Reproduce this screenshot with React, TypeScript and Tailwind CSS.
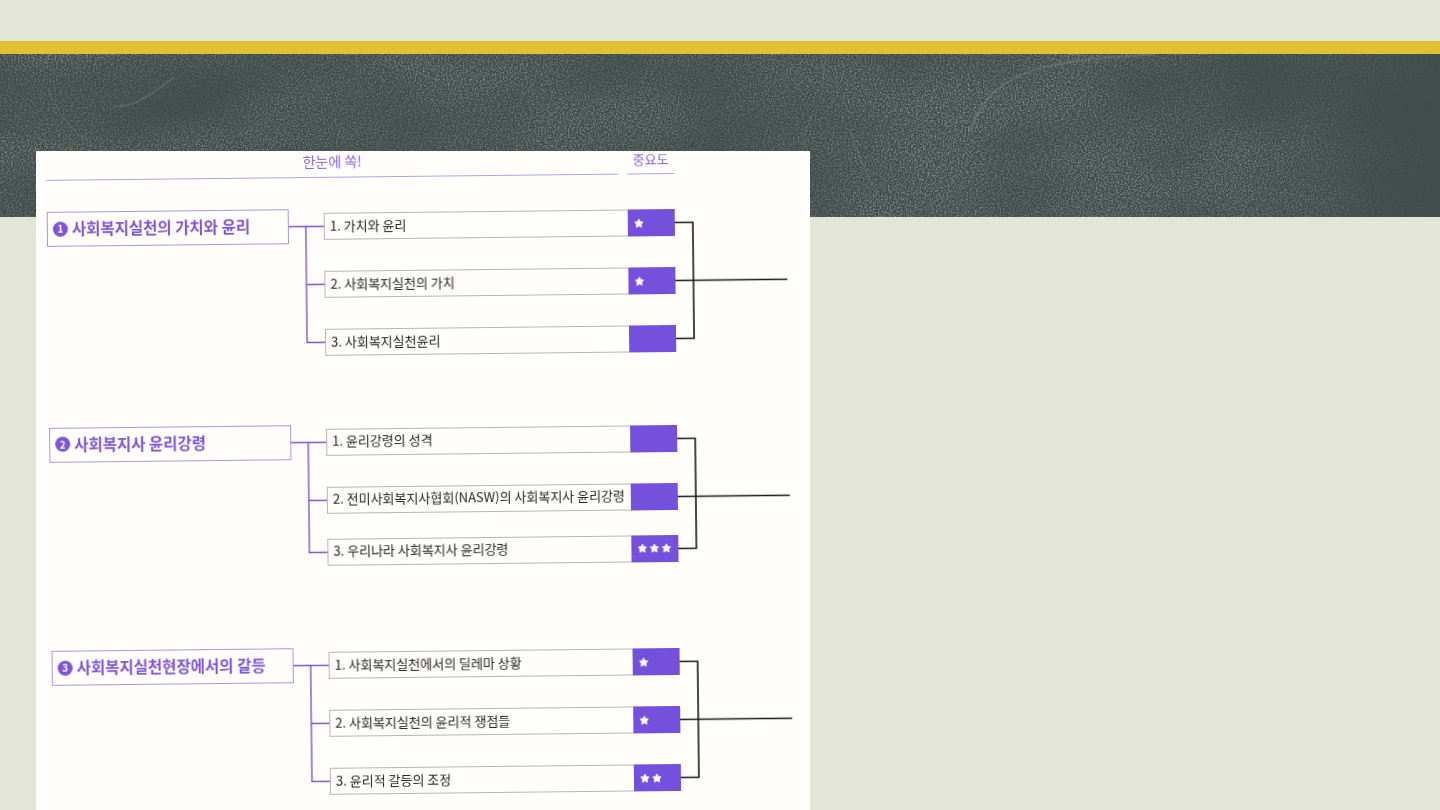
import { Star } from "lucide-react"

const font = { fontFamily: '"Noto Sans CJK KR", "Noto Sans", sans-serif' }

interface Item {
  label: string
  stars: number
}

interface Group {
  num: string
  title: string
  marginTop: string
  rowGaps: string[]
  centers: number[]
  items: Item[]
}

const groups: Group[] = [
  {
    num: "1",
    title: "사회복지실천의 가치와 윤리",
    marginTop: "mt-[31px]",
    rowGaps: ["mt-1", "mt-[31px]", "mt-[31px]"],
    centers: [17.5, 75.5, 133.5],
    items: [
      { label: "1. 가치와 윤리", stars: 1 },
      { label: "2. 사회복지실천의 가치", stars: 1 },
      { label: "3. 사회복지실천윤리", stars: 0 },
    ],
  },
  {
    num: "2",
    title: "사회복지사 윤리강령",
    marginTop: "mt-[68px]",
    rowGaps: ["mt-1", "mt-[31px]", "mt-[25px]"],
    centers: [17.5, 75.5, 127.5],
    items: [
      { label: "1. 윤리강령의 성격", stars: 0 },
      { label: "2. 전미사회복지사협회(NASW)의 사회복지사 윤리강령", stars: 0 },
      { label: "3. 우리나라 사회복지사 윤리강령", stars: 3 },
    ],
  },
  {
    num: "3",
    title: "사회복지실천현장에서의 갈등",
    marginTop: "mt-[82px]",
    rowGaps: ["mt-1", "mt-[31px]", "mt-[31px]"],
    centers: [17.5, 75.5, 133.5],
    items: [
      { label: "1. 사회복지실천에서의 딜레마 상황", stars: 1 },
      { label: "2. 사회복지실천의 윤리적 쟁점들", stars: 1 },
      { label: "3. 윤리적 갈등의 조정", stars: 2 },
    ],
  },
]

function Chalkboard() {
  return (
    <svg className="absolute inset-0 h-full w-full" viewBox="0 0 1440 163" preserveAspectRatio="none">
      <defs>
        <filter id="chalk" x="0" y="0" width="100%" height="100%">
          <feTurbulence type="fractalNoise" baseFrequency="0.6" numOctaves="2" seed="4" result="fine" />
          <feColorMatrix
            in="fine"
            type="matrix"
            values="0 0 0 0 0.42  0 0 0 0 0.46  0 0 0 0 0.44  0 0 0 1.5 -0.58"
            result="grain"
          />
          <feGaussianBlur in="grain" stdDeviation="0.5" result="soft" />
          <feTurbulence type="fractalNoise" baseFrequency="0.006 0.012" numOctaves="2" seed="23" result="cloud" />
          <feColorMatrix
            in="cloud"
            type="matrix"
            values="0 0 0 0 1  0 0 0 0 1  0 0 0 0 1  0 0 0 1.6 -0.1"
            result="patch"
          />
          <feComposite in="soft" in2="patch" operator="in" />
        </filter>
        <linearGradient id="fade" x1="0" x2="1" y1="0" y2="0">
          <stop offset="0" stopColor="#404c4a" stopOpacity="0" />
          <stop offset="1" stopColor="#404c4a" stopOpacity="0.85" />
        </linearGradient>
      </defs>
      <rect width="1440" height="163" filter="url(#chalk)" />
      <g fill="none" stroke="#7d8785" strokeOpacity="0.35" strokeLinecap="round">
        <path d="M48 35c8 22 20 38 42 54" strokeWidth="1" />
        <path d="M115 52c14 2 30-6 58-28" strokeWidth="2" />
        <path d="M355 0c2 8 3 12 2 18M380 2l60 26" strokeWidth="1" />
        <path d="M970 76c12-34 34-50 64-60 50-14 90-12 120-16" strokeWidth="2.5" />
        <path d="M850 76c6 22 14 40 30 68" strokeWidth="1.2" />
        <path d="M826 0c-2 14-4 26-4 40M812 60l-10 30" strokeWidth="1" />
        <path d="M1210 95l12-22M1300 100l6-30" strokeWidth="1" />
      </g>
      <rect x="1240" width="200" height="163" fill="url(#fade)" />
    </svg>
  )
}

function Row({ item, gap }: { item: Item; gap: string }) {
  return (
    <div className={`flex h-[27px] w-[351px] ${gap}`}>
      <div className="flex min-w-0 flex-1 items-center border border-r-0 border-[#b8b4b4] pb-[2px] pl-[5px] text-[13px] whitespace-nowrap text-[#242325]">
        {item.label}
      </div>
      <div className="flex w-[47px] shrink-0 items-center gap-[2px] bg-[#7550dd] pl-[6px]">
        {Array.from({ length: item.stars }).map((_, i) => (
          <Star key={i} size={10} fill="#ffffff" stroke="#ffffff" strokeWidth={2} />
        ))}
      </div>
    </div>
  )
}

function GroupBlock({ group }: { group: Group }) {
  const [a, b, c] = group.centers
  const height = c + 14

  return (
    <div className={`flex items-start ${group.marginTop}`}>
      <div className="flex h-[35px] w-[242px] shrink-0 items-center gap-[4px] border border-[#a996e6] pb-[1px] pl-[5px] text-[15.5px] font-bold whitespace-nowrap text-[#7f52da]">
        <span className="flex h-[15px] w-[15px] shrink-0 items-center justify-center rounded-full bg-[#7f52da] text-[10px] leading-none text-white">
          {group.num}
        </span>
        {group.title}
      </div>
      <svg className="shrink-0" width="35" height={height} fill="none" stroke="#7b55dc" strokeWidth="1.4">
        <path d={`M0 ${a}H35M17 ${a}V${c}H35M17 ${b}H35`} />
      </svg>
      <div className="flex shrink-0 flex-col">
        {group.items.map((item, i) => (
          <Row key={item.label} item={item} gap={group.rowGaps[i]} />
        ))}
      </div>
      <svg className="shrink-0" width="112" height={height} fill="none" stroke="#1c1a1b" strokeWidth="1.6">
        <path d={`M0 ${a}H18V${c}H0M0 ${b}H112`} />
      </svg>
    </div>
  )
}

export default function App() {
  return (
    <div className="relative h-[810px] w-[1440px] overflow-hidden bg-[#e3e5d9]" style={font}>
      <div className="h-[41px]" />
      <div className="h-[13px] bg-[#dfc233]" />
      <div className="relative h-[163px] overflow-hidden bg-[#3f4b49]">
        <Chalkboard />
      </div>

      {/* scanned page, sits over the board */}
      <div className="absolute top-[151px] left-[36px] h-[659px] w-[774px] overflow-hidden bg-[#fffefb]">
        <div className="origin-top-left rotate-[-0.63deg] pl-[10px] blur-[0.35px]">
          <div className="flex gap-[9px]">
            <div className="flex h-[30px] w-[572px] items-center justify-center border-b border-[#b3a0ea] text-[14px] text-[#8a63dd]">
              <span className="-translate-y-[1px]">한눈에 쏙!</span>
            </div>
            <div className="flex h-[30px] w-[47px] items-center justify-center border-b border-[#b3a0ea] text-[13px] text-[#8a63dd]">
              <span>중요도</span>
            </div>
          </div>
          {groups.map((group) => (
            <GroupBlock key={group.num} group={group} />
          ))}
        </div>
      </div>
    </div>
  )
}
